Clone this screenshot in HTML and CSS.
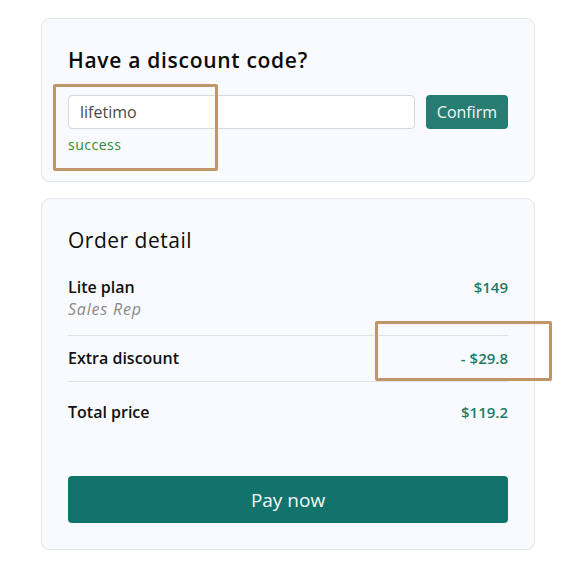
FILE: index.html
```html
<!DOCTYPE html>
<html lang="en">
<head>
<meta charset="utf-8">
<title>Checkout</title>
<link rel="stylesheet" href="styles.css">
</head>
<body>
<main class="page">
  <section class="card discount">
    <h2 class="card-title">Have a discount code?</h2>
    <div class="code-row">
      <input class="code-input" type="text" value="lifetimo">
      <button class="btn-confirm" type="button">Confirm</button>
    </div>
    <div class="status">success</div>
    <div class="mark mark-code"></div>
  </section>

  <section class="card order">
    <h2 class="card-title order-title">Order detail</h2>
    <div class="row row-plan">
      <div class="row-label">
        <div class="label">Lite plan</div>
        <div class="sub">Sales Rep</div>
      </div>
      <div class="price">$149</div>
    </div>
    <div class="row row-discount">
      <div class="label">Extra discount</div>
      <div class="price">- $29.8</div>
      <div class="mark mark-discount"></div>
    </div>
    <div class="row row-total">
      <div class="label">Total price</div>
      <div class="price">$119.2</div>
    </div>
    <button class="btn-pay" type="button">Pay now</button>
  </section>
</main>
</body>
</html>
```

FILE: styles.css
```css
* { box-sizing: border-box; }

html, body {
  margin: 0;
  padding: 0;
  background: #ffffff;
}

body {
  font-family: "Open Sans", "Liberation Sans", sans-serif;
  color: #111111;
}

.page {
  width: 494px;
  margin-left: 41px;
  padding-top: 18px;
  display: flex;
  flex-direction: column;
  gap: 16px;
}

.card {
  position: relative;
  background: #f9fafd;
  border: 1px solid #e4e6ea;
  border-radius: 9px;
  padding: 26px 26px 26px 26px;
  box-shadow: 0 1px 2px rgba(0,0,0,0.03);
}

.card-title {
  margin: 0;
  font-size: 21px;
  line-height: 30px;
  font-weight: 600;
  letter-spacing: 0.7px;
  color: #0b0b0b;
}

.code-row {
  margin-top: 20px;
  display: flex;
  gap: 11px;
  height: 34px;
}

.code-input {
  flex: 1;
  height: 34px;
  border: 1px solid #d7d9dd;
  border-radius: 4px;
  background: #ffffff;
  padding: 0 11px;
  font-family: inherit;
  font-size: 16px;
  color: #4a4a4a;
  outline: none;
}

.btn-confirm {
  width: 82px;
  height: 34px;
  border: none;
  border-radius: 4px;
  background: #277d71;
  color: #f2f7f6;
  font-family: inherit;
  font-size: 16px;
  padding: 0;
}

.status {
  margin-top: 6px;
  font-size: 14px;
  line-height: 20px;
  letter-spacing: 0.5px;
  color: #2f8a35;
}

.order {
  padding-top: 26px;
  padding-bottom: 26px;
}

.order-title {
  font-weight: 500;
  letter-spacing: 0.5px;
}

.row {
  display: flex;
  justify-content: space-between;
  align-items: flex-start;
  position: relative;
}

.label {
  font-size: 16px;
  line-height: 22px;
  font-weight: 600;
  color: #111111;
}

.sub {
  font-size: 16px;
  line-height: 22px;
  font-style: italic;
  letter-spacing: 0.8px;
  color: #8a8a8a;
}

.price {
  font-size: 15px;
  line-height: 22px;
  font-weight: 600;
  color: #1e7a69;
}

.row-plan {
  margin-top: 21px;
  padding-bottom: 15px;
  border-bottom: 1px solid #dfe1e5;
}

.row-discount {
  padding: 11px 0 12px 0;
  border-bottom: 1px solid #dfe1e5;
}

.row-total {
  padding-top: 19px;
}

.btn-pay {
  margin-top: 53px;
  width: 100%;
  height: 47px;
  border: none;
  border-radius: 4px;
  background: #11736a;
  color: #f4f8f7;
  font-family: inherit;
  font-size: 19px;
  padding: 0;
}

.mark {
  position: absolute;
  border: 3px solid #c0956a;
  border-radius: 2px;
  pointer-events: none;
}

.mark-code {
  left: 11px;
  top: 65px;
  width: 165px;
  height: 87px;
}

.mark-discount {
  left: 307px;
  top: -15px;
  width: 177px;
  height: 60px;
}
```
